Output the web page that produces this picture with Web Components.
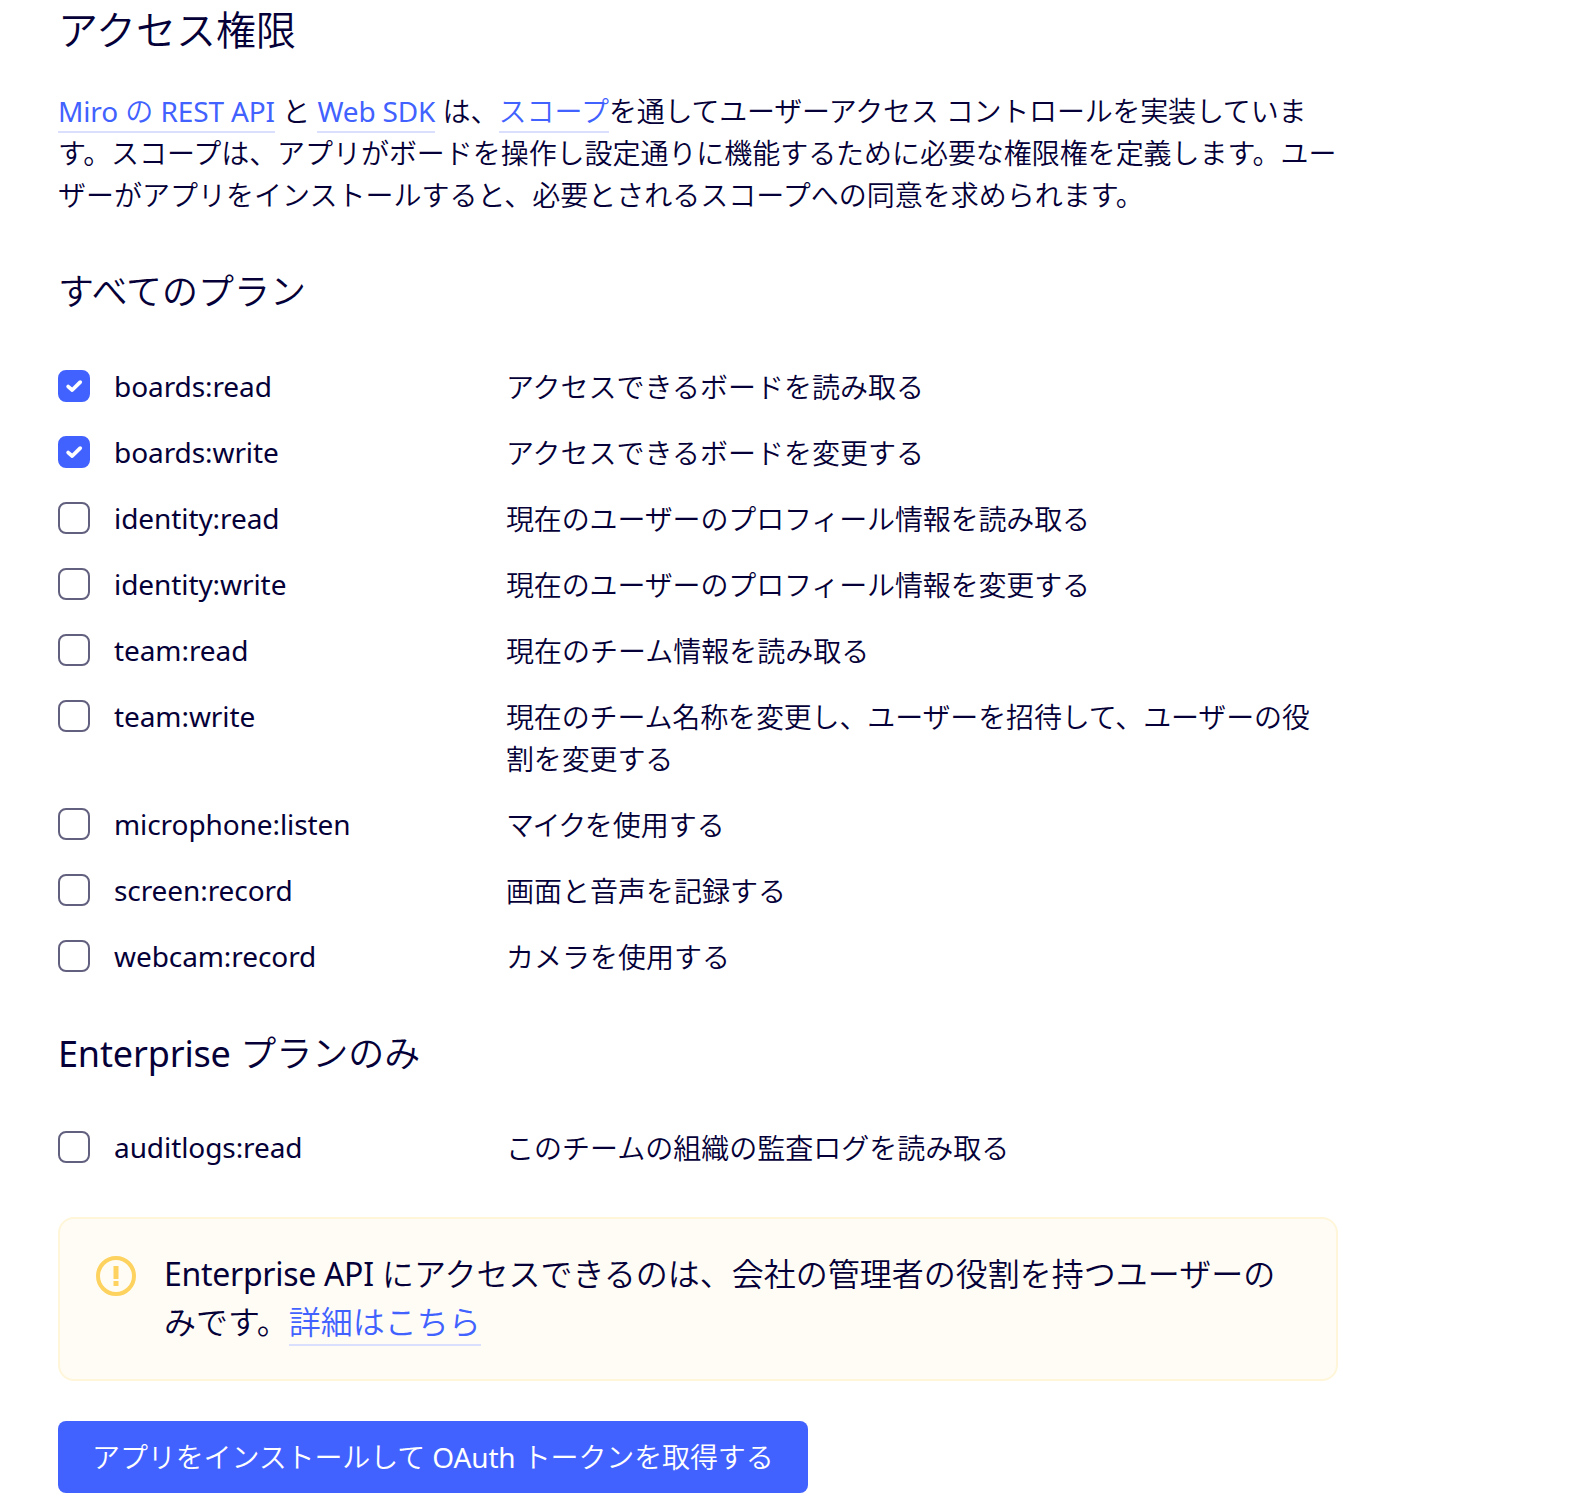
<!DOCTYPE html>
<html lang="ja">
<head>
<meta charset="utf-8">
<title>アクセス権限</title>
<style>
  html, body { margin: 0; padding: 0; background: #fff; }
  body {
    font-family: "Noto Sans", "Noto Sans CJK JP", sans-serif;
    font-size: 28px;
    line-height: 42px;
    color: #050038;
    font-weight: 350;
  }
  .squeeze { letter-spacing: -0.05px; }
  /* latin runs sit at regular weight, the kana stay a touch lighter */
  .lat { font-weight: 400; letter-spacing: -0.15px; }
  .lat.big { letter-spacing: -0.3px; }
  /* the reference kerns katakana a little tighter than this font does */
  .kern { letter-spacing: -0.2px; }
  .kern-desc { letter-spacing: -0.14px; }
  .kern-mai { letter-spacing: -1.6px; }
</style>
</head>
<body>
<template id="tpl-page"><style>
    :host { display: block; width: 1280px; padding: 0 0 17px 58px; }
  </style><slot></slot></template>

<template id="tpl-title"><style>
    :host { display: block; margin-bottom: 30px; font-size: 40px; line-height: 60px; }
  </style><slot></slot></template>

<template id="tpl-intro"><style>
    :host { display: block; width: 1292px; }
  </style><slot></slot></template>

<template id="tpl-subtitle"><style>
    :host { display: block; margin: 50px 0 47px; font-size: 36px; line-height: 52px; }
    :host([tight]) { margin: 51px 0 46px; }
  </style><slot></slot></template>

<template id="tpl-rows"><style>
    :host { display: flex; flex-direction: column; gap: 24px; }
  </style><slot></slot></template>

<!-- no whitespace around the anchor: this host is inline and a stray space would show -->
<template id="tpl-link"><style>
    :host { display: inline; color: #4262ff; }
    a { color: inherit; text-decoration: none; border-bottom: 2px solid #d9dffc; padding-bottom: 1px; }
  </style><a href="#"><slot></slot></a></template>

<template id="tpl-scope"><style>
    :host { display: grid; grid-template-columns: 32px 416px 820px; }
    .box { width: 32px; height: 32px; box-sizing: border-box; border-radius: 8px; border: 2px solid #62607f; margin-top: 5px; display: flex; align-items: center; justify-content: center; }
    :host([checked]) .box { background: #4262ff; border-color: #4262ff; }
    svg { display: none; width: 18px; height: 18px; }
    :host([checked]) svg { display: block; }
    .name { padding-left: 24px; font-weight: 400; letter-spacing: -0.08px; }
    .desc { min-width: 0; margin: 1px 0 -1px; }
  </style><div class="box"><svg viewBox="0 0 18 18"><path d="M3.2 9.6 7.2 13 15.2 5.2" fill="none" stroke="#fff" stroke-width="3.8" stroke-linecap="round" stroke-linejoin="round"/></svg></div><div class="name"><slot name="name"></slot></div><div class="desc"><slot name="desc"></slot></div></template>

<template id="tpl-callout"><style>
    :host { display: flex; box-sizing: border-box; margin-top: 49px; padding: 32px 36px; gap: 28px; background: #fffcf5; border: 2px solid #fff6d9; border-radius: 16px; font-size: 32px; line-height: 48px; }
    svg { width: 40px; height: 40px; flex: none; margin-top: 5px; }
    .text { margin-top: -1px; margin-bottom: 1px; }
  </style><svg viewBox="0 0 40 40">
    <circle cx="20" cy="20" r="18" fill="none" stroke="#fdd25e" stroke-width="4"/>
    <rect x="17.5" y="10" width="5" height="13" fill="#fdd25e"/>
    <rect x="17.5" y="25" width="5" height="5" fill="#fdd25e"/>
  </svg><div class="text"><slot></slot></div></template>

<template id="tpl-button"><style>
    :host { display: inline-block; margin-top: 40px; }
    button { display: block; height: 72px; padding: 0 34px; border: 0; border-radius: 8px; background: #4262ff; color: #fff; font: inherit; letter-spacing: -0.12px; }
  </style><button type="button"><slot></slot></button></template>

<perm-page>
  <perm-title>アクセス権限</perm-title>
  <perm-intro><perm-link><span class="lat">Miro</span> の <span class="lat">REST API</span></perm-link> と <perm-link><span class="lat">Web SDK</span></perm-link> は、<perm-link>スコープ</perm-link><span class="kern">を通してユーザーアクセス コントロールを実装していま</span><span class="squeeze">す。スコープは、アプリがボードを操作し設定通りに機能するために必要な権限権を定義します。ユー</span>ザーがアプリをインストールすると、必要とされるスコープへの同意を求められます。</perm-intro>
  <perm-subtitle>すべてのプラン</perm-subtitle>
  <perm-rows>
    <perm-scope checked><span slot="name">boards:read</span><span slot="desc">アクセスできるボードを読み取る</span></perm-scope>
    <perm-scope checked><span slot="name">boards:write</span><span slot="desc">アクセスできるボードを変更する</span></perm-scope>
    <perm-scope><span slot="name">identity:read</span><span slot="desc" class="kern-desc">現在のユーザーのプロフィール情報を読み取る</span></perm-scope>
    <perm-scope><span slot="name">identity:write</span><span slot="desc" class="kern-desc">現在のユーザーのプロフィール情報を変更する</span></perm-scope>
    <perm-scope><span slot="name">team:read</span><span slot="desc">現在のチーム情報を読み取る</span></perm-scope>
    <perm-scope><span slot="name">team:write</span><span slot="desc" class="kern-desc">現在のチーム名称を変更し、ユーザーを招待して、ユーザーの役割を変更する</span></perm-scope>
    <perm-scope><span slot="name">microphone:listen</span><span slot="desc"><span class="kern-mai">マイク</span>を使用する</span></perm-scope>
    <perm-scope><span slot="name">screen:record</span><span slot="desc">画面と音声を記録する</span></perm-scope>
    <perm-scope><span slot="name">webcam:record</span><span slot="desc">カメラを使用する</span></perm-scope>
  </perm-rows>
  <perm-subtitle tight><span class="lat">Enterprise</span> プランのみ</perm-subtitle>
  <perm-scope><span slot="name">auditlogs:read</span><span slot="desc">このチームの組織の監査ログを読み取る</span></perm-scope>
  <perm-callout><span class="lat big">Enterprise API</span> にアクセスできるのは、会社の管理者の役割を持つユーザーのみです。<perm-link>詳細はこちら</perm-link></perm-callout>
  <perm-button>アプリをインストールして <span class="lat">OAuth</span> トークンを取得する</perm-button>
</perm-page>

<script>
  // every element just clones its template into an open shadow root
  const register = (tag, tplId) => {
    customElements.define(tag, class extends HTMLElement {
      connectedCallback() {
        if (this.shadowRoot) return;
        this.attachShadow({ mode: 'open' });
        this.shadowRoot.appendChild(document.getElementById(tplId).content.cloneNode(true));
      }
    });
  };
  register('perm-page', 'tpl-page');
  register('perm-title', 'tpl-title');
  register('perm-intro', 'tpl-intro');
  register('perm-subtitle', 'tpl-subtitle');
  register('perm-rows', 'tpl-rows');
  register('perm-link', 'tpl-link');
  register('perm-scope', 'tpl-scope');
  register('perm-callout', 'tpl-callout');
  register('perm-button', 'tpl-button');
</script>
</body>
</html>
